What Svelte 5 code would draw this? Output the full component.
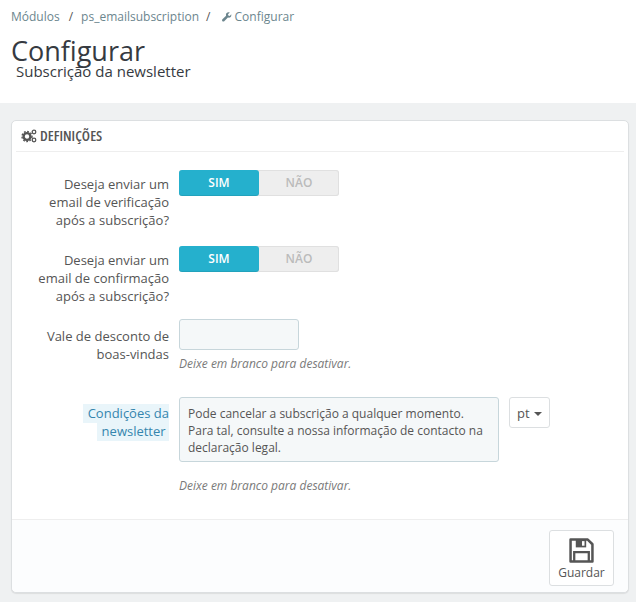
<script>
  const switches = [
    ['Deseja enviar um', 'email de verificação', 'após a subscrição?'],
    ['Deseja enviar um', 'email de confirmação', 'após a subscrição?']
  ];
</script>

<div class="page">
  <header class="head">
    <ul class="crumbs">
      <li>Módulos</li>
      <li class="sep">/</li>
      <li>ps_emailsubscription</li>
      <li class="sep second">/</li>
      <li class="current">
        <svg class="wrench" viewBox="0 0 12 12" width="10" height="10">
          <path d="M11.4 2.6 9.2 4.7 7.6 4.3 7.2 2.7 9.3.6C8-.1 6.5.2 5.6 1.1 4.7 2 4.5 3.3 4.9 4.4L.5 8.8c-.6.6-.6 1.6 0 2.2s1.6.6 2.2 0l4.4-4.4c1.1.4 2.4.2 3.3-.7.9-.9 1.2-2.5.0-3.3z" fill="#6c868e"/>
        </svg>
        Configurar
      </li>
    </ul>
    <h1>Configurar</h1>
    <div class="sub">Subscrição da newsletter</div>
  </header>

  <section class="panel">
    <div class="panel-heading">
      <svg class="gears" viewBox="0 0 16 14" width="16" height="14">
        <circle cx="6" cy="7.5" r="3.4" fill="none" stroke="#555" stroke-width="2.4"/>
        <circle cx="6" cy="7.5" r="5" fill="none" stroke="#555" stroke-width="1.4" stroke-dasharray="1.8 1.5"/>
        <circle cx="13" cy="3" r="1.8" fill="none" stroke="#555" stroke-width="1.3"/>
        <circle cx="13" cy="11" r="1.8" fill="none" stroke="#555" stroke-width="1.3"/>
      </svg>
      <span>DEFINIÇÕES</span>
    </div>

    <div class="form">
      {#each switches as lines}
        <div class="row switch-row">
          <div class="label">
            {#each lines as line}<div>{line}</div>{/each}
          </div>
          <div class="switch">
            <span class="on">SIM</span>
            <span class="off">NÃO</span>
          </div>
        </div>
      {/each}

      <div class="row voucher-row">
        <div class="label"><div>Vale de desconto de</div><div>boas-vindas</div></div>
        <div>
          <input class="voucher" type="text" />
          <p class="help">Deixe em branco para desativar.</p>
        </div>
      </div>

      <div class="row terms-row">
        <div class="label tip">
          <div><span>Condições da</span></div>
          <div><span>newsletter&nbsp;</span></div>
        </div>
        <div>
          <div class="terms-line">
            <div class="terms">Pode cancelar a subscrição a qualquer momento. Para tal, consulte a nossa informação de contacto na declaração legal.</div>
            <button class="lang">pt <i class="caret"></i></button>
          </div>
          <p class="help help-terms">Deixe em branco para desativar.</p>
        </div>
      </div>
    </div>

    <div class="panel-footer">
      <button class="save">
        <svg viewBox="0 0 24 24" width="25" height="25">
          <path d="M1.5 1.5H18L22.5 6V22.5H1.5Z" fill="none" stroke="#555" stroke-width="2.4" stroke-linejoin="round"/>
          <path d="M6.5 1.5H16.5V9H6.5Z" fill="#555"/>
          <rect x="12.5" y="3" width="2.4" height="4.4" fill="#fff"/>
          <path d="M5 22V13.5H19V22" fill="none" stroke="#555" stroke-width="2.2"/>
        </svg>
        <span>Guardar</span>
      </button>
    </div>
  </section>
</div>

<style>
  :global(body) {
    background: #eff1f2;
    font-family: 'Open Sans', sans-serif;
    color: #555;
  }

  .page {
    width: 636px;
    height: 602px;
    overflow: hidden;
  }

  .head {
    height: 103px;
    background: #fff;
    padding: 0 11px;
    box-sizing: border-box;
  }

  .crumbs {
    display: flex;
    list-style: none;
    margin: 0;
    padding: 9px 0 0;
    font-size: 12px;
    line-height: 16px;
    color: #6c868e;
  }

  .crumbs .sep {
    margin: 0 8px 0 9px;
    color: #555;
  }

  .crumbs .second {
    margin: 0 9px 0 7px;
  }

  .wrench {
    margin: 0 -1px 0 3px;
    vertical-align: -1px;
  }

  h1 {
    margin: 12px 0 0;
    font-size: 27px;
    font-weight: 400;
    line-height: 28px;
    color: #363a41;
  }

  .sub {
    margin: -3px 0 0 5px;
    font-size: 15px;
    line-height: 19px;
    color: #363a41;
  }

  .panel {
    margin: 17px 7px 0 11px;
    height: 473px;
    box-sizing: border-box;
    background: #fff;
    border: 1px solid #dcdfe1;
    border-radius: 5px;
    box-shadow: 0 1px 1px rgba(0, 0, 0, 0.08);
    display: flex;
    flex-direction: column;
  }

  .panel-heading {
    margin: 0 4px;
    height: 31px;
    box-sizing: border-box;
    border-bottom: 1px solid #eee;
    display: flex;
    align-items: center;
    gap: 3px;
    padding: 0 0 1px 5px;
    font-size: 14.5px;
    font-weight: 600;
    font-stretch: 75%;
    color: #555;
  }

  .form {
    flex: 1;
    padding-top: 18px;
    font-size: 13px;
    line-height: 18px;
  }

  .row {
    display: grid;
    grid-template-columns: 157px 1fr;
    column-gap: 10px;
  }

  .switch-row {
    height: 76px;
  }

  .label {
    text-align: right;
    color: #555;
    padding-top: 5px;
  }

  .switch {
    display: flex;
    width: 160px;
    height: 26px;
    border-radius: 3px;
    background: #eee;
    box-shadow: inset 0 0 0 1px #e0e0e0;
    font-size: 12px;
    font-weight: 600;
    line-height: 26px;
    text-align: center;
  }

  .on {
    width: 80px;
    background: #25b0cd;
    color: #fff;
    border-radius: 3px;
    box-shadow: inset 0 -1px 0 rgba(0, 0, 0, 0.08);
  }

  .off {
    width: 80px;
    color: #bbb;
  }

  .voucher-row {
    margin-top: -3px;
    height: 78px;
  }

  .voucher-row .label {
    padding-top: 8px;
  }

  .voucher {
    display: block;
    width: 120px;
    height: 31px;
    box-sizing: border-box;
    background: #f5f8f9;
    border: 1px solid #c7d6db;
    border-radius: 3px;
    padding: 0;
    margin: 0;
  }

  .help {
    margin: 5px 0 0;
    font-size: 12px;
    line-height: 17px;
    font-style: italic;
    color: #7a7a7a;
  }

  .terms-row .label {
    padding-top: 7px;
    color: #3586ae;
  }

  .tip span {
    background: #e9f5fa;
    padding: 0 0 1px 5px;
  }

  .terms-line {
    display: flex;
    align-items: flex-start;
    gap: 10px;
  }

  .terms {
    width: 320px;
    height: 65px;
    box-sizing: border-box;
    background: #f5f8f9;
    border: 1px solid #c7d6db;
    border-radius: 3px;
    padding: 7px 8px;
    font-size: 12px;
    line-height: 17px;
    color: #555;
  }

  .lang {
    width: 41px;
    height: 31px;
    background: #fff;
    border: 1px solid #dcdfe1;
    border-radius: 3px;
    padding: 0;
    font-family: inherit;
    font-size: 13px;
    color: #555;
  }

  .caret {
    display: inline-block;
    width: 0;
    height: 0;
    margin-left: 1px;
    vertical-align: 2px;
    border-top: 4px solid #555;
    border-left: 4px solid transparent;
    border-right: 4px solid transparent;
  }

  .help-terms {
    margin-top: 15px;
  }

  .panel-footer {
    height: 73px;
    box-sizing: border-box;
    background: #fcfdfe;
    border-top: 1px solid #eee;
    border-radius: 0 0 5px 5px;
    display: flex;
    justify-content: flex-end;
    padding: 10px 14px 0 0;
  }

  .save {
    width: 65px;
    height: 56px;
    box-sizing: border-box;
    background: #fff;
    border: 1px solid #dcdfe1;
    border-radius: 3px;
    padding: 7px 0 0;
    font-family: inherit;
    font-size: 12px;
    line-height: 16px;
    color: #555;
    display: flex;
    flex-direction: column;
    align-items: center;
    gap: 2px;
  }
</style>
